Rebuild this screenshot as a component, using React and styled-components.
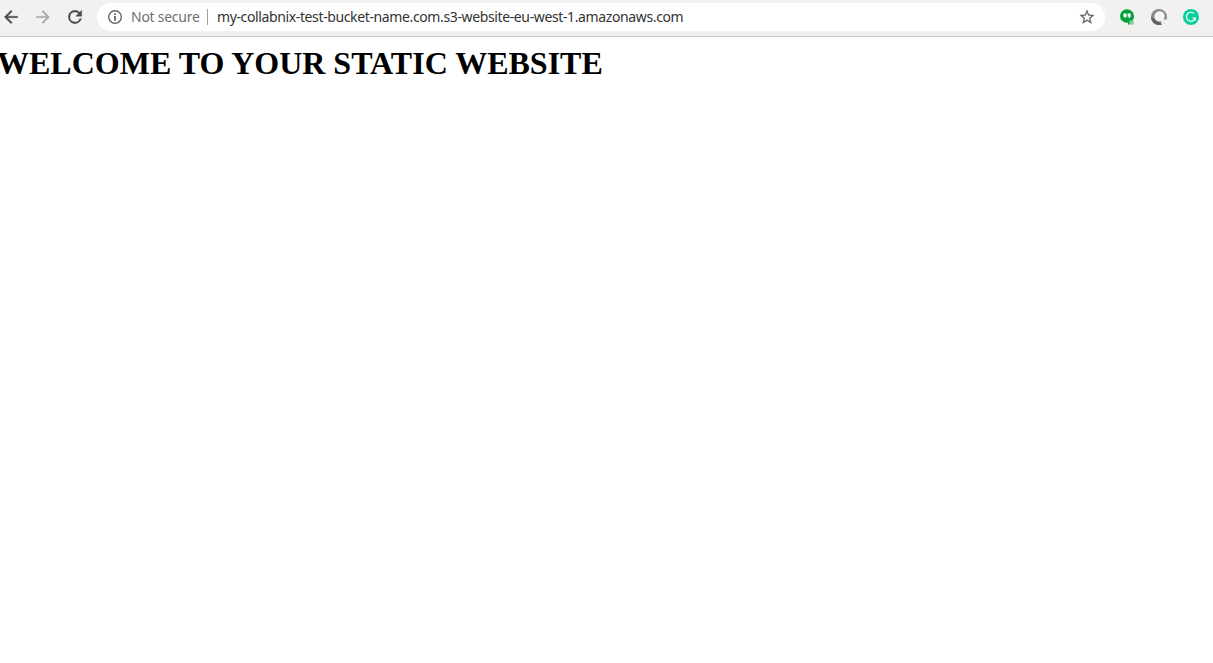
import React from 'react';
import styled, { createGlobalStyle } from 'styled-components';

const GlobalStyle = createGlobalStyle`
  html, body { margin: 0; padding: 0; background: #fff; overflow: hidden; }
`;

const Browser = styled.div`
  display: flex;
  flex-direction: column;
  height: 100vh;
  overflow: hidden;
`;

const Toolbar = styled.header`
  display: flex;
  align-items: flex-start;
  box-sizing: border-box;
  height: 37px;
  padding-top: 3px;
  background: #f2f1f0;
  border-bottom: 1px solid #cbcac9;
`;

const Navigation = styled.nav`
  display: flex;
  gap: 12px;
  width: 96px;
  padding: 4px 0 0 1px;
  box-sizing: border-box;
  flex: none;
`;

const NavButton = styled.button`
  display: flex;
  width: 20px;
  height: 20px;
  padding: 0;
  border: 0;
  background: none;
  color: ${(p) => (p.$muted ? '#aaa9a8' : '#4a4a4a')};
`;

const Icon = styled.svg`
  display: block;
  flex: none;
  width: ${(p) => p.$size}px;
  height: ${(p) => p.$size}px;
  fill: currentColor;
`;

const AddressBar = styled.div`
  display: flex;
  align-items: center;
  box-sizing: border-box;
  width: 1008px;
  height: 28px;
  margin-left: 1px;
  padding: 0 10px 0 10px;
  border-radius: 14px;
  background: #fff;
  color: #666;
  font: 14px/28px 'Noto Sans', 'Open Sans', sans-serif;
  white-space: nowrap;
`;

const Security = styled.span`
  width: 76px;
  margin-left: 8px;
  color: #707070;
  letter-spacing: -0.26px;
`;

const Separator = styled.span`
  width: 1px;
  height: 16px;
  margin-right: 9px;
  background: #a0a0a0;
`;

const Url = styled.span`
  flex: 1;
  color: #333;
  letter-spacing: -0.375px;
`;

const Extensions = styled.div`
  display: flex;
  gap: 16px;
  margin: 6px 0 0 14px;
`;

const Page = styled.main`
  flex: 1;
  background: #fff;
`;

const Title = styled.h1`
  margin: 8px 0 0 -3px;
  color: #000;
  font: bold 32px/37px 'Liberation Serif', serif;
  white-space: nowrap;
`;

export default function App() {
  return (
    <Browser>
      <GlobalStyle />
      <Toolbar>
        <Navigation>
          <NavButton aria-label="Back">
            <Icon $size={20} viewBox="0 0 24 24"><path d="M20 11H7.83l5.59-5.59L12 4l-8 8 8 8 1.41-1.41L7.83 13H20v-2z" stroke="currentColor" strokeWidth=".4" /></Icon>
          </NavButton>
          <NavButton $muted aria-label="Forward">
            <Icon $size={20} viewBox="0 0 24 24"><path d="M12 4l-1.41 1.41L16.17 11H4v2h12.17l-5.58 5.59L12 20l8-8z" stroke="currentColor" strokeWidth=".3" /></Icon>
          </NavButton>
          <NavButton aria-label="Reload">
            <Icon $size={20} viewBox="0 0 24 24"><path d="M17.65 6.35A7.96 7.96 0 0 0 12 4a8 8 0 1 0 7.73 10h-2.08A6 6 0 1 1 12 6c1.66 0 3.14.69 4.22 1.78L13 11h7V4l-2.35 2.35z" stroke="currentColor" strokeWidth=".5" /></Icon>
          </NavButton>
        </Navigation>
        <AddressBar>
          <Icon $size={16} viewBox="0 0 16 16">
            <circle cx="8" cy="8" r="6.3" fill="none" stroke="currentColor" strokeWidth="1.4" />
            <path d="M7.1 4.3h1.8V6H7.1zM7.1 7h1.8v4.7H7.1z" />
          </Icon>
          <Security>Not secure</Security>
          <Separator />
          <Url>my-collabnix-test-bucket-name.com.s3-website-eu-west-1.amazonaws.com</Url>
          <Icon $size={16} viewBox="1.2 1.2 21.6 21.6"><path stroke="currentColor" strokeWidth=".2" d="M22 9.24l-7.19-.62L12 2 9.19 8.63 2 9.24l5.46 4.73L5.82 21 12 17.27 18.18 21l-1.63-7.03L22 9.24zM12 15.4l-3.76 2.27 1-4.28-3.32-2.88 4.38-.38L12 6.1l1.71 4.04 4.38.38-3.32 2.88 1 4.28L12 15.4z" /></Icon>
        </AddressBar>
        <Extensions>
          <Icon $size={16} viewBox="0 0 16 16">
            <path fill="#00a13b" d="M8 .2a7 6.8 0 0 0 0 13.6h1v2.1c3.1-1.7 6-5 6-8.9A7 6.8 0 0 0 8 .2z" />
            <path fill="#fff" d="M4.4 4.4h3.1v2.8c0 1.1-.7 1.9-1.9 1.9V7.8H4.4zM8.6 4.4h3.1v2.8c0 1.1-.7 1.9-1.9 1.9V7.8H8.6z" />
            <rect x="10.5" y="11.5" width="4.2" height="4.2" rx="1" fill="#8bcb9b" />
          </Icon>
          <Icon $size={16} viewBox="0 0 16 16">
            <circle cx="8" cy="8" r="8" fill="#8a8a8a" />
            <path fill="#626262" d="M0 8a8 8 0 0 0 11 7.4L6 11z" />
            <ellipse cx="8.5" cy="7.3" rx="5.3" ry="5" fill="#f5f5f5" transform="rotate(-40 8.5 7.3)" />
            <rect x="10.4" y="10.2" width="5.6" height="5.8" rx="2" fill="#f7f7f7" />
            <path fill="#bbb" d="M12.7 11.4h1v1h-1zM12.7 13.5h1v1h-1z" />
          </Icon>
          <Icon $size={16} viewBox="0 0 16 16">
            <circle cx="8" cy="8" r="8" fill="#06cf9c" />
            <path fill="none" stroke="#fff" strokeWidth="1.2" d="M11.2 4.6A4.5 4.5 0 1 0 12.3 9H9.2M12.3 8.4v3.1" />
          </Icon>
        </Extensions>
      </Toolbar>
      <Page>
        <Title>WELCOME TO YOUR STATIC WEBSITE</Title>
      </Page>
    </Browser>
  );
}
